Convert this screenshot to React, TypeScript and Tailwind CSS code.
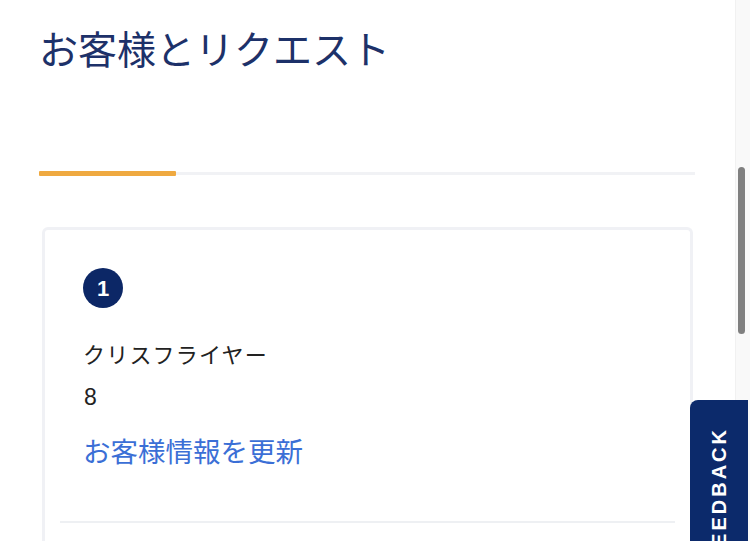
import React from "react";

export default function App() {
  return (
    <div
      className="relative w-[750px] h-[541px] overflow-hidden bg-white"
      style={{ fontFamily: '"Noto Sans CJK JP", "Noto Sans", sans-serif' }}
    >
      <div className="flex h-full">
        <main className="flex w-[735px] shrink-0 flex-col pl-[39px] pr-[40px] pt-[24px]">
          <h1 className="text-[39px] leading-[46px] font-normal text-[#1d3169]">
            お客様とリクエスト
          </h1>
          <div className="mt-[101px] flex h-[5px] items-center">
            <div className="h-[5px] w-[137px] rounded-[1px] bg-[#efa940]" />
            <div className="h-[3px] flex-1 bg-[#f1f2f5]" />
          </div>
          <section className="ml-[3px] mt-[51px] flex w-[651px] flex-1 flex-col rounded-t-[6px] border-[3px] border-b-0 border-[#f0f1f5] pt-[38px]">
            <div className="flex flex-col items-start pl-[38px]">
              <div className="flex h-[40px] w-[40px] items-center justify-center rounded-full bg-[#0c2766] text-[22px] font-bold text-white" style={{ fontFamily: '"Liberation Sans", Arial, sans-serif' }}>
                1
              </div>
              <div className="mt-[31px] text-[22px] leading-[28px] tracking-[1.2px] text-[#222222]">
                クリスフライヤー
              </div>
              <div
                className="mt-[15px] pl-[1px] text-[23px] leading-[30px] text-[#222222]"
                style={{ fontFamily: '"Liberation Sans", Arial, sans-serif' }}
              >
                8
              </div>
              <div className="mt-[20px] text-[27.5px] leading-[36px] text-[#3b6fd6]">
                お客様情報を更新
              </div>
            </div>
            <div className="mx-[15px] mt-[53px] h-[2px] bg-[#eef0f3]" />
          </section>
        </main>
        <div className="flex w-[15px] shrink-0 flex-col border-l border-[#f1f1f1] bg-[#f9f9f9] pl-[2px] pt-[167px]">
          <div className="h-[167px] w-[7px] rounded-full bg-[#808080]" />
        </div>
      </div>
      <div className="absolute left-[690px] top-[400px] flex h-[200px] w-[58px] justify-center rounded-tl-[8px] bg-[#0c2a6b] pt-[27px]">
        <span
          className="h-fit rotate-180 text-[20px] font-bold leading-[24px] tracking-[3px] text-white [writing-mode:vertical-rl]"
          style={{ fontFamily: '"Liberation Sans", Arial, sans-serif' }}
        >
          FEEDBACK
        </span>
      </div>
    </div>
  );
}
